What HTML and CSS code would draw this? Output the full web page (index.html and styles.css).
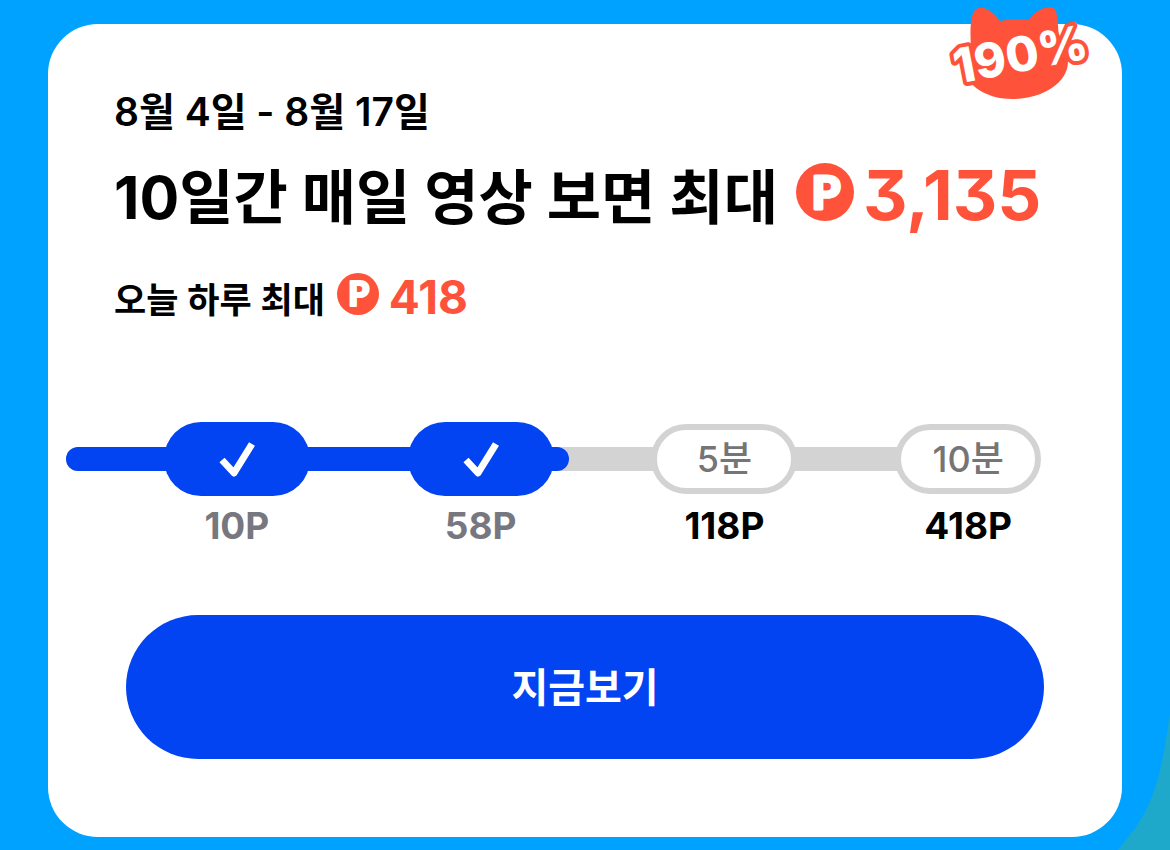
FILE: index.html
```html
<!DOCTYPE html>
<html lang="ko">
  <head>
    <meta charset="utf-8">
    <meta name="viewport" content="width=device-width, initial-scale=1">
    <title>지금보기</title>
    <link rel="stylesheet" href="styles.css">
  </head>
  <body>
    <svg class="corner" viewBox="0 0 52 145" aria-hidden="true">
      <path d="M52 8C45 54 41 88 18 122L0 145H52Z" fill="#1ea9cb"/>
    </svg>

    <main class="card">
      <!-- cat badge -->
      <svg class="badge" viewBox="0 0 150 104" role="img" aria-label="190%">
        <path class="cat" d="M31 48C30 32 30 16 35 10C42 4 53 11 60 21C70 19 80 19 89 20C95 11 107 4 115 9C118 15 118 28 119 38L128 60C129 83 102 99 72 99C49 99 33 88 29 80Z"/>
        <text class="badge-text" x="17" y="84" transform="rotate(-11 17 84)">190%</text>
      </svg>

      <div class="intro">
        <p class="date">8월 4일 - 8월 17일</p>
        <h1 class="title">
          <span>10일간 매일 영상 보면 최대</span>
          <svg class="coin" viewBox="0 0 58 58" aria-hidden="true">
            <circle cx="29" cy="29" r="29"/>
            <text x="30" y="46" text-anchor="middle">P</text>
          </svg>
          <span class="point">3,135</span>
        </h1>
        <p class="today">
          <span>오늘 하루 최대</span>
          <svg class="coin" viewBox="0 0 58 58" aria-hidden="true">
            <circle cx="29" cy="29" r="29"/>
            <text x="30" y="46" text-anchor="middle">P</text>
          </svg>
          <span class="point">418</span>
        </p>
      </div>

      <div class="progress">
        <div class="track"><div class="fill" style="width: 55.8%"></div></div>
        <ol class="steps">
          <li class="step done">
            <span class="pill">
              <svg class="check" viewBox="0 0 36 36" aria-hidden="true"><path d="M3 19L15 32L33 3"/></svg>
            </span>
            <span class="label">10P</span>
          </li>
          <li class="step done">
            <span class="pill">
              <svg class="check" viewBox="0 0 36 36" aria-hidden="true"><path d="M3 19L15 32L33 3"/></svg>
            </span>
            <span class="label">58P</span>
          </li>
          <li class="step">
            <span class="pill">5분</span>
            <span class="label">118P</span>
          </li>
          <li class="step">
            <span class="pill">10분</span>
            <span class="label">418P</span>
          </li>
        </ol>
      </div>

      <button type="button" class="watch">지금보기</button>
    </main>
  </body>
</html>
```
FILE: styles.css
```css
* {
  box-sizing: border-box;
}

body {
  margin: 0;
  padding: 24px 48px 13px;
  min-height: 100vh;
  position: relative;
  background: #00a2ff;
  color: #000;
  font-family: Inter, "Noto Sans CJK KR", sans-serif;
}

h1,
p,
ol {
  margin: 0;
  padding: 0;
}

/* Teal shape behind the card */
.corner {
  position: absolute;
  right: 0;
  bottom: 0;
  width: 52px;
  height: 145px;
}

.card {
  position: relative;
  padding: 64px 0 78px;
  border-radius: 50px;
  background: #fff;
}

/* Badge sits over the top right corner */
.badge {
  position: absolute;
  top: -24px;
  right: 32px;
  width: 150px;
  height: 104px;
  overflow: visible;
}

.cat {
  fill: #ff523b;
}

.badge-text {
  fill: #fff;
  stroke: #ff523b;
  stroke-width: 8px;
  stroke-linejoin: round;
  paint-order: stroke;
  font-size: 48px;
  font-weight: 800;
}

.intro {
  padding: 0 66px;
}

.date {
  font-size: 39px;
  font-weight: 600;
  line-height: 48px;
}

.title,
.today {
  display: flex;
  align-items: center;
  white-space: nowrap;
}

.title {
  margin-top: 22px;
  font-size: 59px;
  font-weight: 700;
  line-height: 80px;
}

.today {
  margin-top: 32px;
  font-size: 35px;
  font-weight: 600;
  line-height: 60px;
}

.point {
  color: #ff523b;
  font-weight: 700;
  line-height: 1;
  font-feature-settings: "cv09";
}

.title .point {
  margin-bottom: 6px;
  font-size: 69px;
}

.today .point {
  margin-bottom: 6px;
  font-size: 46px;
}

.coin {
  flex: none;
  fill: #ff523b;
  overflow: visible;
}

.coin text {
  fill: #fff;
  stroke: #fff;
  stroke-width: 3px;
  stroke-linejoin: round;
  font-family: Lato, sans-serif;
  font-size: 46px;
  font-weight: 900;
}

.title .coin {
  width: 58px;
  height: 58px;
  margin: 0 9px 12px 18px;
}

.today .coin {
  width: 42px;
  height: 42px;
  margin: 0 10px 12px 12px;
}

/* Track and steps share one grid cell */
.progress {
  display: grid;
  margin-top: 92px;
}

.track,
.steps {
  grid-area: 1 / 1;
}

.track {
  height: 24px;
  margin: 25px 154px 0 18px;
  border-radius: 12px;
  background: #d3d3d3;
}

.fill {
  height: 100%;
  border-radius: 12px;
  background: #0344f2;
}

.steps {
  z-index: 1;
  display: grid;
  grid-template-columns: repeat(4, 1fr);
  padding: 0 32px 0 67px;
  list-style: none;
}

.step {
  display: flex;
  flex-direction: column;
  align-items: center;
}

.pill {
  display: flex;
  align-items: center;
  justify-content: center;
  width: 146px;
  height: 70px;
  margin: 2px 0;
  padding-bottom: 6px;
  border: 6px solid #d3d3d3;
  border-radius: 37px;
  background: #fff;
  color: #757575;
  font-size: 36px;
  font-weight: 500;
}

.done .pill {
  height: 74px;
  margin: 0;
  padding: 0;
  border: 0;
  background: #0344f2;
}

.check {
  width: 36px;
  height: 36px;
  fill: none;
  stroke: #fff;
  stroke-width: 7px;
  stroke-linejoin: round;
  overflow: visible;
}

.label {
  margin-top: 8px;
  font-size: 37px;
  font-weight: 700;
  line-height: 44px;
}

.done .label {
  color: #777780;
}

.watch {
  display: block;
  width: calc(100% - 156px);
  height: 144px;
  margin: 67px auto 0;
  padding-bottom: 6px;
  border: 0;
  border-radius: 72px;
  background: #0344f2;
  color: #fff;
  font-family: inherit;
  font-size: 40px;
  font-weight: 600;
  cursor: pointer;
}
```
